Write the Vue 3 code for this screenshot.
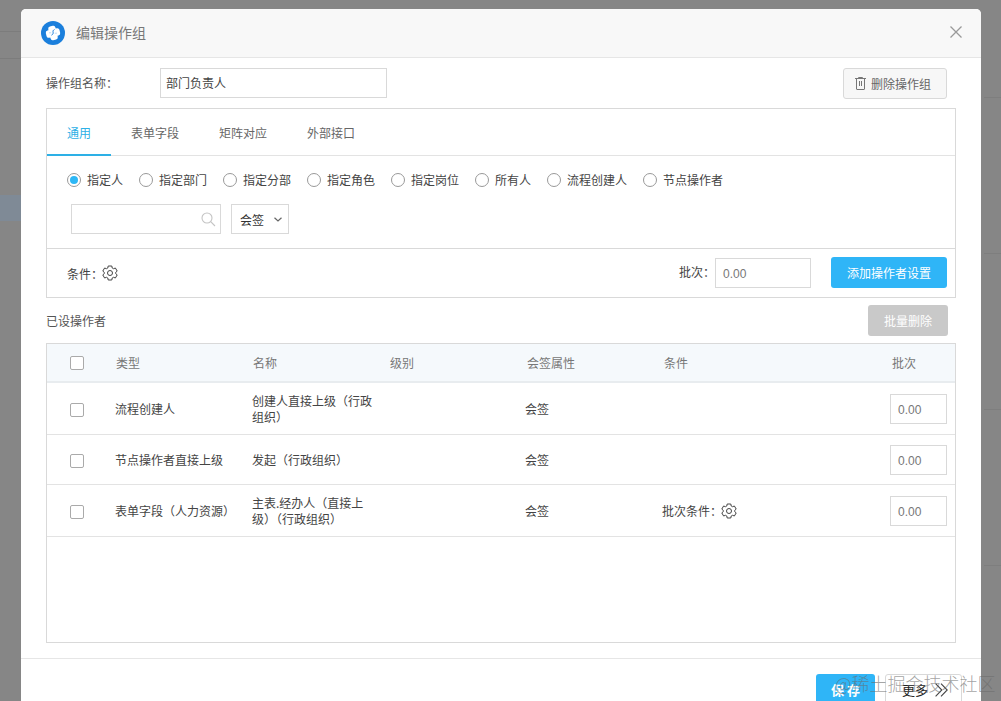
<script setup>
const radios = ['指定人', '指定部门', '指定分部', '指定角色', '指定岗位', '所有人', '流程创建人', '节点操作者']
const tabs = ['通用', '表单字段', '矩阵对应', '外部接口']
const rows = [
  { type: '流程创建人', name: '创建人直接上级（行政组织）', cls: 'r1' },
  { type: '节点操作者直接上级', name: '发起（行政组织）', cls: 'r2' },
  { type: '表单字段（人力资源）', name: '主表.经办人（直接上级）（行政组织）', cond: true, cls: 'r3' }
]
const gearPath = 'M6.200 1h3.600l.4 2 1.300.7 1.900-.7 1.800 3.100-1.500 1.300v1.200l1.500 1.300-1.800 3.100-1.900-.7-1.300.7-.4 2H6.200l-.4-2-1.300-.7-1.900.7L.8 9.900l1.500-1.300V7.400L.8 6.100l1.800-3.100 1.900.7 1.300-.7z'
</script>

<template>
  <div class="page">
    <div class="dialog">
      <header class="head">
        <span class="logo">
          <svg width="24" height="24" viewBox="0 0 24 24">
            <circle cx="12" cy="12" r="12" fill="#1b7fdc" />
            <g transform="rotate(-14 12 12)" fill="#fff">
              <rect x="5" y="8.300" width="14" height="7.400" rx="2.200" />
              <rect x="8.300" y="5" width="7.400" height="14" rx="2.200" />
            </g>
            <path d="M13.500 8.500c-1.300.6-1.700 1.500-1.400 2.700.3 1.100-.2 2.300-1.600 3" fill="none" stroke="#1b7fdc" stroke-width="1" />
            <path d="M8 11.800h2.200M13.800 12.200H16" fill="none" stroke="#8fc3f0" stroke-width=".6" />
          </svg>
        </span>
        <span class="title">编辑操作组</span>
        <svg class="close" width="12" height="12" viewBox="0 0 12 12">
          <path d="M.5.5l11 11M11.500.5l-11 11" stroke="#999" stroke-width="1.300" fill="none" />
        </svg>
      </header>

      <div class="body">
        <div class="name-row">
          <label class="name-label">操作组名称：</label>
          <div class="name-input">部门负责人</div>
          <button class="del-btn">
            <svg width="11" height="13" viewBox="0 0 11 13" fill="none" stroke="#777" stroke-width="1">
              <path d="M0 1.500h11M1.500 1.500v10.500a.5.5 0 0 0 .5.5h7a.5.500 0 0 0 .5-.5V1.500M3.500 1V.5h4V1M4.500 4v5M6.500 4v5" />
            </svg>
            <span>删除操作组</span>
          </button>
        </div>

        <section class="panel">
          <nav class="tabs">
            <span v-for="(t, i) in tabs" :key="t" class="tab" :class="{ active: i === 0 }">{{ t }}</span>
          </nav>
          <div class="radios">
            <span v-for="(r, i) in radios" :key="r" class="radio">
              <i class="dot" :class="{ on: i === 0 }"></i>{{ r }}
            </span>
          </div>
          <div class="pickers">
            <div class="search">
              <svg width="15" height="15" viewBox="0 0 15 15" fill="none" stroke="#c4c4c4" stroke-width="1.100">
                <circle cx="6" cy="6" r="5" />
                <path d="M9.700 9.700l4.300 4.300" />
              </svg>
            </div>
            <div class="select">
              <span>会签</span>
              <svg width="8" height="5" viewBox="0 0 8 5" fill="none" stroke="#666" stroke-width="1.200">
                <path d="M.5.700 4 4l3.500-3.300" />
              </svg>
            </div>
          </div>
          <div class="panel-foot">
            <span class="cond">条件：
              <svg width="16" height="16" viewBox="0 0 16 16" fill="none" stroke="#444" stroke-width="1">
                <path :d="gearPath" /><circle cx="8" cy="8" r="2.500" />
              </svg>
            </span>
            <span class="spacer"></span>
            <span class="batch-label">批次：</span>
            <div class="batch-input">0.00</div>
            <button class="add-btn">添加操作者设置</button>
          </div>
        </section>

        <div class="list-head">
          <span>已设操作者</span>
          <button class="bulk-btn">批量删除</button>
        </div>

        <section class="table">
          <div class="tr th">
            <span class="c-check"><i class="box"></i></span>
            <span class="c-type">类型</span>
            <span class="c-name">名称</span>
            <span class="c-level">级别</span>
            <span class="c-attr">会签属性</span>
            <span class="c-cond">条件</span>
            <span class="c-batch">批次</span>
          </div>
          <div v-for="row in rows" :key="row.type" class="tr td" :class="row.cls">
            <span class="c-check"><i class="box"></i></span>
            <span class="c-type">{{ row.type }}</span>
            <span class="c-name">{{ row.name }}</span>
            <span class="c-level"></span>
            <span class="c-attr">会签</span>
            <span class="c-cond">
              <template v-if="row.cond">批次条件：
                <svg width="16" height="16" viewBox="0 0 16 16" fill="none" stroke="#444" stroke-width="1">
                  <path :d="gearPath" /><circle cx="8" cy="8" r="2.500" />
                </svg>
              </template>
            </span>
            <span class="c-batch"><div class="cell-input">0.00</div></span>
          </div>
        </section>
      </div>

      <footer class="foot">
        <button class="save">保 存</button>
        <button class="more">更多
          <svg width="13" height="14" viewBox="0 0 13 14" fill="none" stroke="#444" stroke-width="1.100">
            <path d="M.6.6 6.800 7 .6 13.400M6 .6 12.200 7 6 13.400" />
          </svg>
        </button>
      </footer>
    </div>
    <div class="watermark">@稀土掘金技术社区</div>
  </div>
</template>

<style>
html, body { margin: 0; overflow: hidden; }
</style>

<style scoped>
.page {
  position: relative;
  width: 1001px;
  height: 701px;
  overflow: hidden;
  padding: 9px 20px 0 21px;
  box-sizing: border-box;
  font-family: "Noto Sans CJK SC", "Liberation Sans", sans-serif;
  font-size: 12px;
  color: #444;
  background-color: #868686;
  background-image:
    linear-gradient(#7f8a96, #7f8a96),
    linear-gradient(#7c7c7c, #7c7c7c),
    linear-gradient(#7c7c7c, #7c7c7c),
    repeating-linear-gradient(180deg, transparent 0 96px, #7e7e7e 96px 97px, transparent 97px 156px);
  background-size: 21px 26px, 21px 1px, 21px 1px, 17px 100%;
  background-position: 0 195px, 0 31px, 0 58px, 984px 1px;
  background-repeat: no-repeat;
}
.dialog {
  width: 960px;
  height: 760px;
  background: #fff;
  border-radius: 5px 5px 0 0;
  overflow: hidden;
}
.head {
  height: 48px;
  box-sizing: content-box;
  display: flex;
  align-items: center;
  padding-left: 20px;
  background: #f8f8f8;
  border-bottom: 1px solid #e6e6e6;
}
.logo { width: 24px; height: 24px; display: flex; }
.title { margin-left: 11px; margin-top: -2px; font-size: 14px; line-height: 48px; color: #777; }
.close { margin-left: auto; margin-right: 19px; margin-top: -2px; }
.body { padding: 10px 25px 0; height: 590px; box-sizing: content-box; border-bottom: 1px solid #e6e6e6; }
.name-row { display: flex; align-items: flex-start; height: 40px; }
.name-label { width: 114px; line-height: 30px; color: #555; }
.name-input {
  width: 227px;
  height: 30px;
  box-sizing: border-box;
  border: 1px solid #d9d9d9;
  padding-left: 5px;
  line-height: 27px;
  color: #444;
}
.del-btn {
  margin-left: auto;
  margin-right: 9px;
  width: 104px;
  height: 31px;
  display: flex;
  align-items: center;
  gap: 5px;
  border: 1px solid #d9d9d9;
  border-radius: 3px;
  background: #f7f7f7;
  font: inherit;
  color: #666;
  padding: 0 0 0 11px;
}
.panel { width: 910px; height: 190px; box-sizing: border-box; border: 1px solid #d9d9d9; }
.tabs { display: flex; height: 46px; border-bottom: 1px solid #e3e3e3; box-sizing: content-box; }
.tab { padding: 0 20px; line-height: 48px; height: 46px; color: #666; }
.tab.active { color: #2db0e6; box-shadow: inset 0 -2px 0 #2db0e6; height: 46px; margin-bottom: -1px; padding-bottom: 1px; line-height: 48px; }
.radios { display: flex; gap: 16px; padding: 16px 0 0 20px; height: 32px; box-sizing: content-box; margin-bottom: 0; color: #444; }
.radio { display: flex; align-items: center; gap: 6px; height: 16px; line-height: 16px; }
.dot {
  width: 14px; height: 14px; box-sizing: border-box;
  border: 1px solid #999; border-radius: 50%; background: #fff;
  display: flex; align-items: center; justify-content: center;
}
.dot.on::after { content: ""; width: 8px; height: 8px; border-radius: 50%; background: #2db7f5; }
.pickers { display: flex; gap: 10px; padding-left: 24px; height: 44px; margin-top: 0; }
.search {
  width: 150px; height: 30px; box-sizing: border-box;
  border: 1px solid #d9d9d9;
  display: flex; align-items: center; justify-content: flex-end;
  padding-right: 4px;
}
.select {
  width: 58px; height: 30px; box-sizing: border-box;
  border: 1px solid #d9d9d9;
  display: flex; align-items: center;
  padding-left: 8px; gap: 10px;
  color: #333;
}
.panel-foot {
  display: flex; align-items: flex-start;
  border-top: 1px solid #d9d9d9;
  height: 48px;
  padding-left: 20px;
  box-sizing: content-box;
}
.cond { display: flex; align-items: center; height: 48px; color: #444; }
.cond svg { margin-left: -1px; }
.spacer { flex: 1; }
.batch-label { line-height: 46px; margin-right: 0; color: #444; }
.batch-input {
  width: 96px; height: 30px; margin-top: 9px; box-sizing: border-box;
  border: 1px solid #d9d9d9;
  padding-left: 7px; line-height: 30px; color: #777;
  font-family: "Liberation Sans", sans-serif;
}
.add-btn {
  width: 116px; height: 31px; margin: 8px 8px 0 20px;
  border: 0; border-radius: 3px; background: #2fb5f7;
  color: #fff; font: inherit; padding: 0;
}
.list-head { display: flex; align-items: center; justify-content: space-between; height: 45px; color: #555; padding-top: 0; width: 902px; }
.bulk-btn {
  width: 80px; height: 31px;
  border: 0; border-radius: 3px; background: #c9c9c9;
  color: #fff; font: inherit; padding: 0;
}
.table { width: 910px; height: 300px; box-sizing: border-box; border: 1px solid #d9d9d9; }
.tr { display: flex; align-items: center; border-bottom: 1px solid #e3e3e3; }
.th { height: 37px; background: #f5f9fc; border-bottom: 2px solid #e8ecef; color: #777; }
.r1 { height: 51px; }
.r2 { height: 49px; }
.r3 { height: 51px; }
.c-check { width: 69px; padding-left: 23px; box-sizing: border-box; display: flex; }
.td .c-check { margin-top: 2px; }
.box { width: 14px; height: 14px; box-sizing: border-box; border: 1px solid #aaa; border-radius: 2px; background: #fff; }
.c-type { width: 137px; flex: none; }
.c-name { width: 137px; flex: none; line-height: 16px; padding-right: 8px; box-sizing: border-box; }
.c-level { width: 137px; flex: none; }
.c-attr { width: 137px; flex: none; }
.c-cond { width: 228px; flex: none; display: flex; align-items: center; }
.c-cond svg { margin-left: -1px; }
.c-batch { flex: none; }
.td .c-type { margin-left: -1px; }
.td .c-name { width: 136px; }
.cell-input {
  width: 57px; height: 30px; box-sizing: border-box;
  border: 1px solid #d9d9d9;
  padding-left: 7px; line-height: 30px; color: #777;
  font-family: "Liberation Sans", sans-serif;
}
.foot { display: flex; justify-content: flex-end; padding: 15px 19px 0 0; gap: 10px; }
.save {
  width: 59px; height: 31px; border: 0; border-radius: 3px 3px 0 0;
  background: #2fb5f7; color: #fff; font: inherit; font-weight: 700; font-size: 13px; padding: 0;
}
.more {
  width: 77px; height: 31px; border: 1px solid #d9d9d9; border-radius: 3px 3px 0 0;
  background: #fff; color: #222; font: inherit; font-size: 13px; padding: 0 0 0 16px;
  display: flex; align-items: center; gap: 7px;
}
.watermark {
  position: absolute;
  left: 835px;
  top: 671px;
  font-size: 18px;
  line-height: 24px;
  font-weight: 300;
  color: rgba(105, 105, 105, 0.62);
  white-space: nowrap;
}
</style>
